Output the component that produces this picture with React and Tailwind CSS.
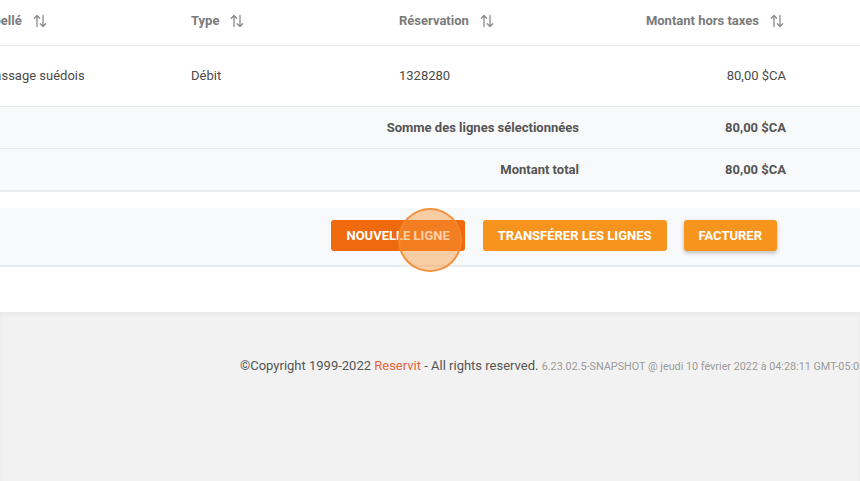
import React from "react";

function SortIcon() {
  return (
    <svg width="14" height="14" viewBox="0 0 14 14" className="ml-[11px] shrink-0" fill="none" stroke="#8a8a8a" strokeWidth="1.3" strokeLinecap="round" strokeLinejoin="round">
      <path d="M4 12.5V1.5M1.3 4.2L4 1.5l2.7 2.7" />
      <path d="M10 1.5v11M7.3 9.8L10 12.5l2.7-2.7" />
    </svg>
  );
}

function Header({ children, right }) {
  return (
    <div className={"flex items-center h-full " + (right ? "justify-end" : "")}>
      <span>{children}</span>
      <SortIcon />
    </div>
  );
}

export default function App() {
  return (
    <div className="w-[860px] h-[481px] overflow-hidden bg-[#f2f2f2] font-['Roboto',sans-serif] relative">
      <div className="bg-white h-[312px] flex flex-col">
        {/* table */}
        <div className="-ml-[17px] w-[877px]">
          <div className="flex h-[46px] border-b border-[#e9ecef] text-[13px] font-bold text-[#7a7a7a]">
            <div className="w-[208px] pb-[3px]"><Header>Libellé</Header></div>
            <div className="w-[208px] pb-[3px]"><Header>Type</Header></div>
            <div className="w-[200px] pb-[3px]"><Header>Réservation</Header></div>
            <div className="w-[203px] pr-[18px] pb-[3px]"><Header right>Montant hors taxes</Header></div>
          </div>
          <div className="flex items-center h-[61px] border-b border-[#e9ecef] text-[13px] text-[#4a4a4a]">
            <div className="w-[208px]">Massage suédois</div>
            <div className="w-[208px]">Débit</div>
            <div className="w-[200px]">1328280</div>
            <div className="w-[203px] pr-4 text-right">80,00 $CA</div>
          </div>
          <div className="flex items-center h-[42px] border-b border-[#e9ecef] bg-[#f8f9fa] text-[13px] font-bold text-[#555]">
            <div className="w-[616px] pr-5 text-right">Somme des lignes sélectionnées</div>
            <div className="w-[203px] pr-4 text-right">80,00 $CA</div>
          </div>
          <div className="flex items-center h-[43px] border-b-2 border-[#e9ecef] bg-[#f8f9fa] text-[13px] font-bold text-[#555]">
            <div className="w-[616px] pr-5 text-right">Montant total</div>
            <div className="w-[203px] pr-4 text-right">80,00 $CA</div>
          </div>
        </div>

        {/* button bar */}
        <div className="mt-4 h-[59px] bg-[#f8f9fa] border-b-2 border-[#e9ecef] flex items-center justify-end pr-[83px] gap-[17px] pb-[2px]">
          <button className="h-[31px] px-[15px] rounded-[3px] bg-[#ee6a0c] text-white text-[13px] font-bold">NOUVELLE LIGNE</button>
          <button className="ml-px h-[31px] px-[15px] rounded-[3px] bg-[#f7941e] text-white text-[13px] font-bold">TRANSFÉRER LES LIGNES</button>
          <button className="h-[31px] px-[15px] rounded-[3px] bg-[#f7941e] text-white text-[13px] font-bold shadow-[0_2px_4px_rgba(0,0,0,0.25)]">FACTURER</button>
        </div>
      </div>

      {/* footer */}
      <div className="shadow-[inset_0_3px_4px_rgba(0,0,0,0.04)] h-[169px] pt-[44px] pl-[240px] whitespace-nowrap text-[13px] text-[#555]">
        <span>©Copyright 1999-2022 </span>
        <span className="text-[#e5643a]">Reservit</span>
        <span> - All rights reserved. </span>
        <span className="text-[10.8px] text-[#9a9a9a]">6.23.02.5-SNAPSHOT @ jeudi 10 février 2022 à 04:28:11 GMT-05:00</span>
      </div>

      {/* click indicator */}
      <div className="absolute left-[398px] top-[208px] w-[64px] h-[64px] rounded-full bg-[rgba(249,150,60,0.45)] border-2 border-[rgba(242,135,45,0.85)]" />
    </div>
  );
}
